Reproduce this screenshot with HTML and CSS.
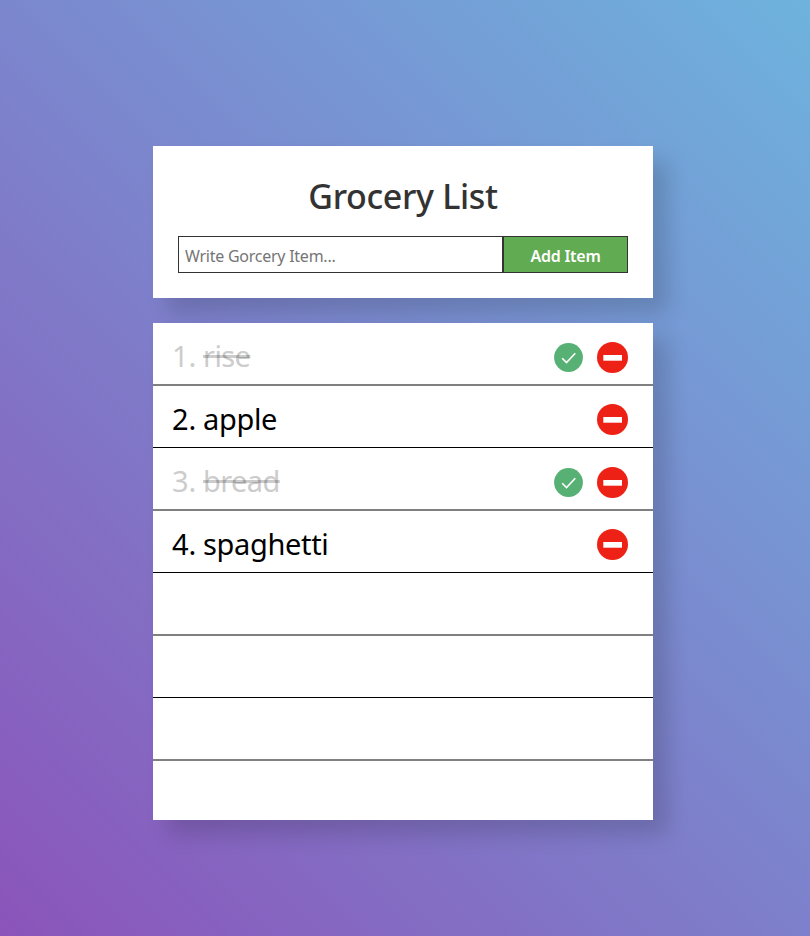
FILE: index.html
```html
<!DOCTYPE html>
<html lang="en">
<head>
<meta charset="utf-8">
<title>Grocery List</title>
<link rel="stylesheet" href="styles.css">
</head>
<body>
<svg class="defs" aria-hidden="true">
  <symbol id="check" viewBox="0 0 29 29"><circle cx="14.5" cy="14.5" r="14.4" fill="#57b174"/><path d="M8.2 15.2l4.3 4.3 8.8-9.3" fill="none" stroke="#fff" stroke-width="1.6"/></symbol>
  <symbol id="remove" viewBox="0 0 31 31"><circle cx="15.5" cy="15.5" r="15.5" fill="#ed2115"/><path d="M6.3 13h18.7v5.7H6.3z" fill="#fff"/></symbol>
</svg>
<main class="app">
  <section class="card head">
    <h1 class="title"><span>Grocery List</span></h1>
    <form class="form">
      <input class="field" type="text" placeholder="Write Gorcery Item...">
      <button class="add" type="button">Add Item</button>
    </form>
  </section>
  <ol class="card list">
    <li class="row done"><span class="num">1.</span><span class="name">rise</span><svg class="check"><use href="#check"/></svg><svg class="remove"><use href="#remove"/></svg></li>
    <li class="row"><span class="num">2.</span><span class="name">apple</span><svg class="remove"><use href="#remove"/></svg></li>
    <li class="row done"><span class="num">3.</span><span class="name">bread</span><svg class="check"><use href="#check"/></svg><svg class="remove"><use href="#remove"/></svg></li>
    <li class="row"><span class="num">4.</span><span class="name">spaghetti</span><svg class="remove"><use href="#remove"/></svg></li>
    <li class="row"></li>
    <li class="row"></li>
    <li class="row"></li>
    <li class="row last"></li>
  </ol>
</main>
</body>
</html>
```
FILE: styles.css
```css
* { box-sizing: border-box; }
body {
  margin: 0;
  height: 936px;
  padding: 146px 0 0 153px;
  overflow: hidden;
  background: linear-gradient(45deg, #8b54ba, #6eb3de);
  font-family: "Segoe UI", "Noto Sans", sans-serif;
}
.defs { display: none; }
.app { width: 500px; display: flex; flex-direction: column; gap: 25px; }
.card { background: #fff; box-shadow: 15px 15px 20px rgba(0, 0, 0, .15); }
.head { height: 152px; padding: 25px; }
.title {
  margin: 0;
  height: 65px;
  line-height: 50px;
  text-align: center;
  font-size: 34px;
  font-weight: 500;
  letter-spacing: -.35px;
  color: #333;
}
.form { display: flex; height: 37px; }
.field {
  width: 325px;
  padding: 2px 6px 0;
  border: 1px solid #333;
  border-radius: 0;
  outline: 0;
  font: 16px "Segoe UI", "Noto Sans", sans-serif;
  letter-spacing: -.25px;
}
.field::placeholder { color: #757575; }
.add {
  width: 125px;
  padding: 2px 0 0;
  border: 1px solid #333;
  background: #61ab53;
  color: #fff;
  font: 600 16px "Segoe UI", "Noto Sans", sans-serif;
  letter-spacing: -.25px;
}
.list { margin: 0; padding: 0; list-style: none; }
.row {
  height: 62px;
  display: flex;
  align-items: center;
  padding: 6px 25px 0 19px;
  border-bottom: 1px solid #000;
  font-size: 29px;
  font-weight: 380;
  line-height: 40px;
  color: #000;
}
.row:nth-child(odd) { height: 63px; padding-top: 8px; border-bottom: 2px solid #808080; }
.row.last { height: 59px; border: 0; }
.num, .name { padding-bottom: 2px; }
.row:nth-child(odd) .num, .row:nth-child(odd) .name { padding-bottom: 4px; }
.num { width: 31px; }
.name { margin-right: auto; letter-spacing: -.35px; }
.done .num, .done .name { color: #ccc; }
.done .name { text-decoration: line-through 3px rgba(0, 0, 0, .2); letter-spacing: -.6px; }
.check { width: 29px; height: 29px; margin-right: 14px; }
.remove { width: 31px; height: 31px; }
```
